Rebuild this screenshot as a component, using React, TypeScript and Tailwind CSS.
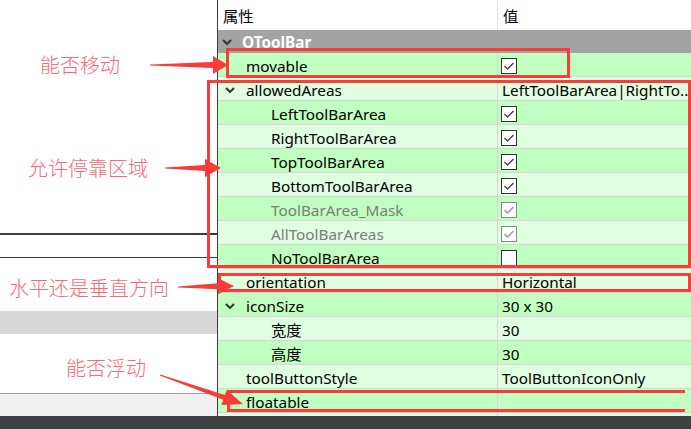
import React from "react";

type Row = {
  name: string;
  depth: 0 | 1;
  value?: string;
  check?: "on" | "off" | "dim";
  open?: boolean;
  dim?: boolean;
};

const rows: Row[] = [
  { name: "movable", depth: 0, check: "on" },
  { name: "allowedAreas", depth: 0, open: true, value: "LeftToolBarArea|RightTo.." },
  { name: "LeftToolBarArea", depth: 1, check: "on" },
  { name: "RightToolBarArea", depth: 1, check: "on" },
  { name: "TopToolBarArea", depth: 1, check: "on" },
  { name: "BottomToolBarArea", depth: 1, check: "on" },
  { name: "ToolBarArea_Mask", depth: 1, check: "dim", dim: true },
  { name: "AllToolBarAreas", depth: 1, check: "dim", dim: true },
  { name: "NoToolBarArea", depth: 1, check: "off" },
  { name: "orientation", depth: 0, value: "Horizontal" },
  { name: "iconSize", depth: 0, open: true, value: "30 x 30" },
  { name: "宽度", depth: 1, value: "30" },
  { name: "高度", depth: 1, value: "30" },
  { name: "toolButtonStyle", depth: 0, value: "ToolButtonIconOnly" },
  { name: "floatable", depth: 0 },
];

const Chevron = () => (
  <svg width="10" height="6" viewBox="0 0 10 6">
    <path d="M1 1 L5 5 L9 1" fill="none" stroke="#333" strokeWidth="2" />
  </svg>
);

const CheckBox = ({ kind }: { kind: "on" | "off" | "dim" }) => (
  <div
    className={
      "mt-[3px] w-[16px] h-[16px] border bg-white flex items-center justify-center " +
      (kind === "dim" ? "border-[#8a8a8a]" : "border-[#333]")
    }
  >
    {kind !== "off" && (
      <svg width="12" height="10" viewBox="0 0 12 10">
        <path
          d="M1.5 5 L4.5 8 L10.5 2"
          fill="none"
          stroke={kind === "dim" ? "#9a9a9a" : "#444"}
          strokeWidth="1.5"
        />
      </svg>
    )}
  </div>
);

// arrow polygon: thin tail widening to a triangular head
const arrow = (x1: number, y1: number, x2: number, y2: number, head = 16, half = 9, shaft = 3) => {
  const dx = x2 - x1;
  const dy = y2 - y1;
  const len = Math.hypot(dx, dy);
  const ux = dx / len;
  const uy = dy / len;
  const px = -uy;
  const py = ux;
  const bx = x2 - ux * head;
  const by = y2 - uy * head;
  const pts = [
    [x1 + px * 0.5, y1 + py * 0.5],
    [bx + px * shaft, by + py * shaft],
    [bx + px * half, by + py * half],
    [x2, y2],
    [bx - px * half, by - py * half],
    [bx - px * shaft, by - py * shaft],
    [x1 - px * 0.5, y1 - py * 0.5],
  ];
  return pts.map((p) => p.map((n) => n.toFixed(1)).join(",")).join(" ");
};

const RED = "#fb3a3a";

export default function App() {
  return (
    <div
      className="relative w-[691px] h-[429px] overflow-hidden bg-white text-[15.3px] text-black"
      style={{ fontFamily: '"Noto Sans", "Noto Sans CJK SC", sans-serif' }}
    >
      <div className="flex h-[416px]">
        {/* left panel */}
        <div className="w-[217px] flex flex-col">
          <div className="h-[233px]" />
          <div className="h-[25px] border-t-2 border-b border-[#3c3c3c]" />
          <div className="h-[53px]" />
          <div className="h-[23px] bg-[#d8d8d8]" />
          <div className="h-[59px]" />
          <div className="flex-1 border-t border-[#a0a0a0] bg-[#efefef]" />
        </div>
        <div className="w-px bg-[#3c3c3c]" />

        {/* property editor */}
        <div className="flex-1 flex flex-col overflow-hidden">
          <div className="h-[30px] flex items-center">
            <div className="w-[279px] pl-[5px] pt-[3px]">属性</div>
            <div className="flex-1 h-full flex items-center pl-[5px] pt-[3px] border-l border-[#e2e2e2]">值</div>
          </div>
          <div className="h-[23px] flex items-center bg-[#a3a3a3]">
            <div className="w-[24px] pl-[4px] flex">
              <Chevron />
            </div>
            <span className="font-bold text-white pt-[2px]">QToolBar</span>
          </div>
          {rows.map((r, i) => (
            <div
              key={r.name}
              className={
                "h-[24px] flex border-b border-[#d6d6d6] " +
                (i % 2 === 0 ? "bg-[#c0ffc0]" : "bg-[#e0ffe0]")
              }
            >
              <div className={"w-[279px] flex items-center " + (r.depth ? "pl-[29px]" : "pl-[4px]")}>
                <div className="w-[24px] flex pl-[3px] pt-[2px]">{r.open && <Chevron />}</div>
                <span className={"pt-[3px] " + (r.dim ? "text-[#7c7c7c]" : "")}>{r.name}</span>
              </div>
              <div className="flex-1 flex items-center border-l border-[#d6d6d6] pl-[3px] whitespace-nowrap overflow-hidden">
                {r.check ? <CheckBox kind={r.check} /> : <span className="pl-[1px] pt-[3px]">{r.value}</span>}
              </div>
            </div>
          ))}
          <div className="flex-1 flex bg-[#e0ffe0]">
            <div className="w-[279px]" />
            <div className="flex-1 border-l border-[#d6d6d6]" />
          </div>
        </div>
      </div>
      <div className="h-[13px] bg-[#404142]" />

      {/* annotations */}
      <div
        className="absolute inset-0 pointer-events-none text-[20px] leading-none text-[#fa6878]"
        style={{ fontFamily: '"Noto Sans CJK SC", sans-serif', fontWeight: 300 }}
      >
        <div className="absolute left-[40px] top-[55px]">能否移动</div>
        <div className="absolute left-[28px] top-[158px]">允许停靠区域</div>
        <div className="absolute left-[9px] top-[278px]">水平还是垂直方向</div>
        <div className="absolute left-[66px] top-[358px]">能否浮动</div>
        <svg className="absolute inset-0" width="691" height="429">
          <g fill="none" stroke={RED} strokeWidth="3">
            <rect x="227.5" y="49.5" width="341" height="27" />
            <rect x="208.5" y="81.5" width="481" height="185" />
            <rect x="219.5" y="274.5" width="470" height="16" />
            <polyline points="685,391.5 228.5,391.5 228.5,410.5 685,410.5" />
          </g>
          <g fill={RED}>
            <polygon points={arrow(150, 65, 228, 65, 15, 9, 3)} />
            <polygon points={arrow(165, 168, 221, 168, 16, 9, 3)} />
            <polygon points={arrow(178, 287, 234, 286, 16, 8, 3)} />
            <polygon points={arrow(160, 375, 243, 404, 20, 8, 2.5)} />
          </g>
        </svg>
      </div>
    </div>
  );
}
